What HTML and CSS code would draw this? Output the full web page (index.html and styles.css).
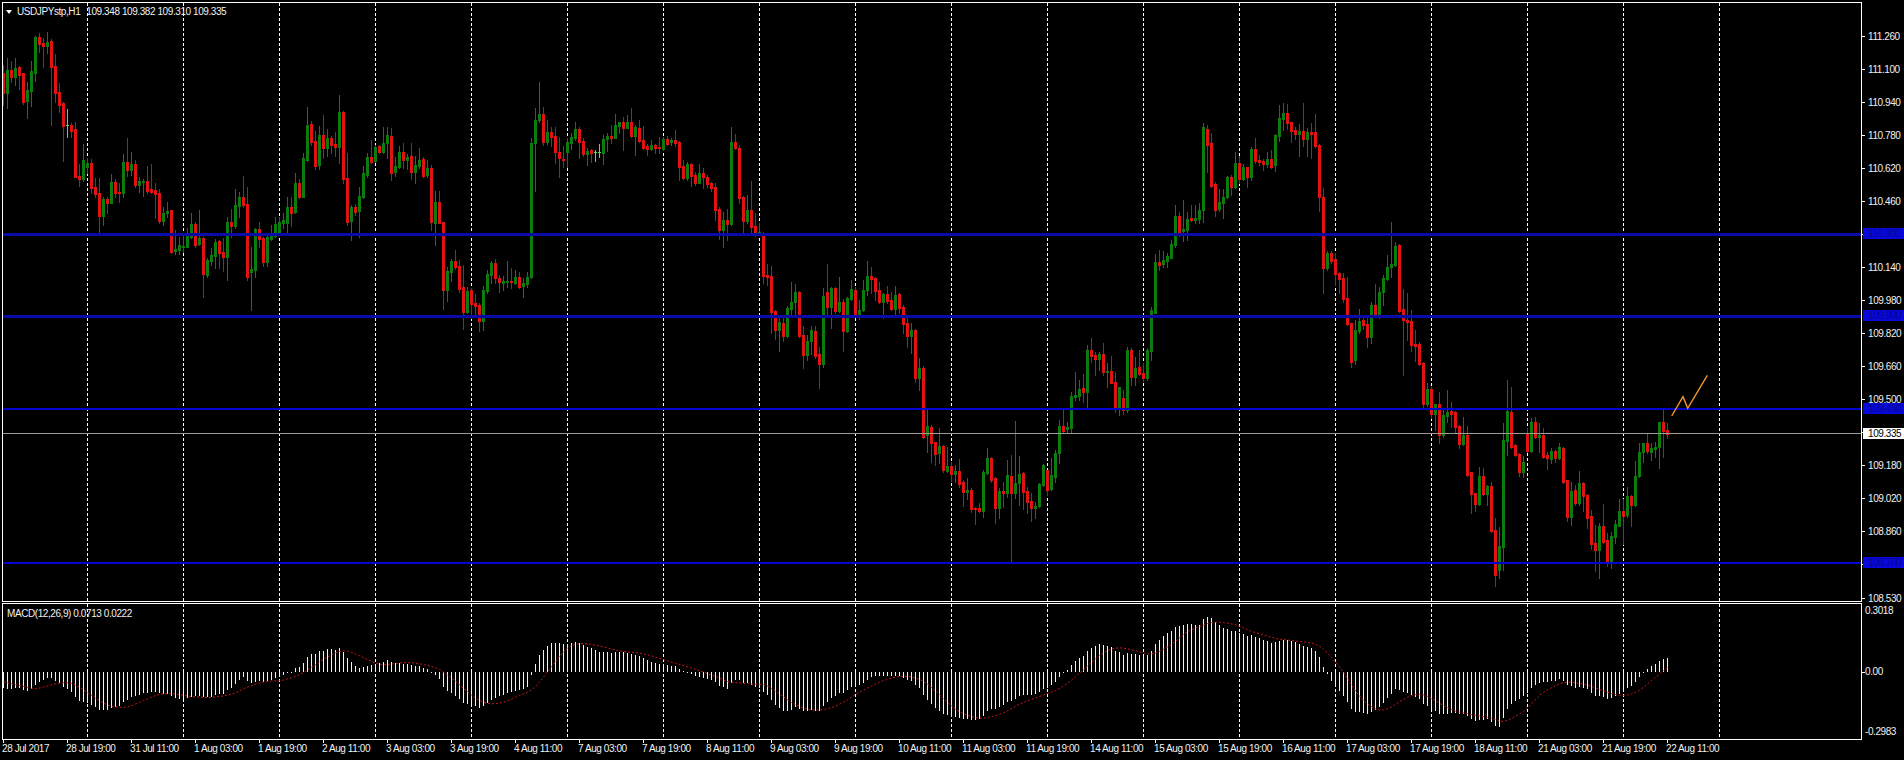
FILE: index.html
```html
<!DOCTYPE html>
<html lang="en">
<head>
<meta charset="utf-8">
<title>USDJPYstp,H1</title>
<link rel="stylesheet" href="styles.css">
</head>
<body>
<div class="terminal">
  <section class="row row-price">
    <div class="pane pane-price">
      <svg id="price-svg" class="plot" width="1858" height="598" viewBox="3 3 1858 598"></svg>
      <div class="legend legend-price">
        <span class="menu-arrow"></span>
        <span class="symbol">USDJPYstp,H1</span>
        <span>109.348 109.382 109.310 109.335</span>
      </div>
    </div>
    <div class="axis price-axis">
      <div class="tick">111.260</div>
      <div class="tick">111.100</div>
      <div class="tick">110.940</div>
      <div class="tick">110.780</div>
      <div class="tick">110.620</div>
      <div class="tick">110.460</div>
      <div class="tick">110.300</div>
      <div class="tick">110.140</div>
      <div class="tick">109.980</div>
      <div class="tick">109.820</div>
      <div class="tick">109.660</div>
      <div class="tick">109.500</div>
      <div class="tick">109.340</div>
      <div class="tick">109.180</div>
      <div class="tick">109.020</div>
      <div class="tick">108.860</div>
      <div class="tick">108.700</div>
      <div class="tick tick-last">108.530</div>
      <div class="badge badge-blue badge-a">110.300</div>
      <div class="badge badge-blue badge-b">109.900</div>
      <div class="badge badge-blue badge-c">109.450</div>
      <div class="badge badge-blue badge-d">108.700</div>
      <div class="badge badge-white badge-e">109.335</div>
    </div>
  </section>
  <section class="row row-macd">
    <div class="pane pane-macd">
      <svg id="macd-svg" class="plot" width="1858" height="135" viewBox="3 604 1858 135"></svg>
      <div class="legend legend-macd">MACD(12,26,9) 0.0713 0.0222</div>
    </div>
    <div class="axis macd-axis">
      <div class="macd-label">0.3018</div>
      <div class="macd-label macd-zero">0.00</div>
      <div class="macd-label">-0.2983</div>
    </div>
  </section>
  <footer class="time-axis">
    <div class="time">28 Jul 2017</div>
    <div class="time">28 Jul 19:00</div>
    <div class="time">31 Jul 11:00</div>
    <div class="time">1 Aug 03:00</div>
    <div class="time">1 Aug 19:00</div>
    <div class="time">2 Aug 11:00</div>
    <div class="time">3 Aug 03:00</div>
    <div class="time">3 Aug 19:00</div>
    <div class="time">4 Aug 11:00</div>
    <div class="time">7 Aug 03:00</div>
    <div class="time">7 Aug 19:00</div>
    <div class="time">8 Aug 11:00</div>
    <div class="time">9 Aug 03:00</div>
    <div class="time">9 Aug 19:00</div>
    <div class="time">10 Aug 11:00</div>
    <div class="time">11 Aug 03:00</div>
    <div class="time">11 Aug 19:00</div>
    <div class="time">14 Aug 11:00</div>
    <div class="time">15 Aug 03:00</div>
    <div class="time">15 Aug 19:00</div>
    <div class="time">16 Aug 11:00</div>
    <div class="time">17 Aug 03:00</div>
    <div class="time">17 Aug 19:00</div>
    <div class="time">18 Aug 11:00</div>
    <div class="time">21 Aug 03:00</div>
    <div class="time">21 Aug 19:00</div>
    <div class="time">22 Aug 11:00</div>
  </footer>
</div>
<script src="chart.js"></script>
</body>
</html>
```
FILE: styles.css
```css
* { box-sizing: border-box; }
html, body { margin: 0; padding: 0; background: #000; }
body {
  width: 1904px;
  height: 760px;
  overflow: hidden;
  color: #f0f0f0;
  font-family: "Liberation Sans", Arial, sans-serif;
  font-size: 10px;
  letter-spacing: -0.42px;
}
.terminal { padding: 2px 0 0 2px; }
.row { display: flex; }
.row-price { height: 600px; margin-bottom: 1px; }
.row-macd { height: 137px; }
.pane {
  position: relative;
  width: 1860px;
  border: 1px solid #fff;
  background: #000;
}
.plot { display: block; shape-rendering: crispEdges; }

.legend {
  position: absolute;
  display: flex;
  align-items: center;
  white-space: nowrap;
  line-height: 12px;
}
.legend-price { left: 3px; top: 3px; }
.legend-macd { left: 4px; top: 4px; }
.menu-arrow {
  width: 0;
  height: 0;
  margin-right: 5px;
  border-left: 3.5px solid transparent;
  border-right: 3.5px solid transparent;
  border-top: 4px solid #fff;
}
.symbol { margin-right: 6px; }

.axis { position: relative; flex: 1; }
.price-axis {
  display: flex;
  flex-direction: column;
  padding-top: 18px;
}
.tick {
  display: flex;
  align-items: center;
  height: 33px;
  flex: none;
}
.tick::before {
  content: "";
  width: 3px;
  height: 1px;
  margin-right: 3px;
  background: #fff;
}
.tick-last { margin-top: 1px; }

.badge {
  position: absolute;
  left: 1px;
  right: 0;
  height: 11px;
  padding-left: 5px;
  line-height: 11px;
}
.badge-blue { background: #0808dc; color: #06068c; }
.badge-white { background: #fff; color: #000; }
.badge-a { top: 226px; }
.badge-b { top: 308px; }
.badge-c { top: 401px; }
.badge-d { top: 555px; }
.badge-e { top: 426px; }

.macd-axis {
  display: flex;
  flex-direction: column;
  padding-top: 1px;
}
.macd-label {
  height: 14px;
  line-height: 14px;
  padding-left: 3px;
}
.macd-zero {
  position: relative;
  margin-top: 47px;
  margin-bottom: 46px;
}
.macd-zero::before {
  content: "";
  position: absolute;
  left: 0;
  top: 7px;
  width: 3px;
  height: 1px;
  background: #fff;
}

.time-axis {
  display: flex;
  padding-left: 0;
}
.time {
  position: relative;
  flex: none;
  width: 64px;
  padding-top: 3px;
  line-height: 12px;
  white-space: nowrap;
}
.time::before {
  content: "";
  position: absolute;
  left: 1px;
  top: 0;
  width: 1px;
  height: 3px;
  background: #fff;
}

.wick-bull { fill: #127a12; }
.wick-bear { fill: #c01414; }
.wick-doji { fill: #5fd85f; }
.body-bull { fill: #0c7c0c; }
.body-bear { fill: #e01212; }
.grid-line { stroke: #fff; stroke-width: 1; stroke-dasharray: 3 2; }
.level { stroke: #0a0aa8; stroke-width: 3; }
.level-bright { stroke: #0404d0; stroke-width: 2; }
.last-price { stroke: #9c9c9c; stroke-width: 1; }
.forecast {
  fill: none;
  stroke: #f2962c;
  stroke-width: 1.4;
  shape-rendering: geometricPrecision;
}
.hist { fill: #f4f4f4; }
.signal {
  fill: none;
  stroke: #c81818;
  stroke-width: 1;
  stroke-dasharray: 2 2;
  shape-rendering: geometricPrecision;
}
```
FILE: chart.js
```javascript
(function () {
var NS = "http://www.w3.org/2000/svg";
var DATA = "r73,93,65,105 g70,93,58,108 r70,77,61,82 g68,77,58,85 r67,75,66,89 r73,102,73,104 g90,101,82,118 g71,91,61,106 g37,73,36,81 r37,44,33,52 " +
"r43,46,38,67 g42,46,32,53 r41,67,39,125 r66,93,54,102 r92,105,83,112 r103,126,102,161 d125,126,109,137 r125,131,123,137 r129,177,122,177 r176,179,164,186 " +
"g160,179,144,181 g163,167,158,173 r163,188,159,193 r187,194,178,197 r193,216,178,235 g199,216,197,225 r199,203,197,213 g182,203,174,203 r182,193,179,197 r192,193,183,202 " +
"g162,193,154,197 r162,170,138,176 g164,170,152,175 r164,185,160,187 g181,185,177,192 g181,182,179,196 r181,191,166,193 r189,192,164,193 r190,194,183,218 r193,221,189,223 " +
"g213,221,207,225 g211,213,202,217 r210,252,210,253 g249,251,230,254 g245,250,237,254 g246,247,235,252 g236,247,228,247 g224,237,213,238 r224,245,222,247 g238,244,210,245 " +
"r238,274,237,297 g260,275,258,277 g255,261,248,265 g242,256,239,268 r241,253,240,268 r252,257,238,271 g222,257,217,280 r222,226,209,237 g205,226,189,228 g197,206,192,217 " +
"r197,205,176,207 r204,277,187,280 g269,272,247,310 g229,270,228,277 r229,239,222,247 r238,262,237,266 g237,262,236,266 g235,239,225,240 g224,236,217,237 g222,233,217,235 " +
"g220,223,213,228 g207,223,197,232 r207,213,197,226 g183,212,173,213 r183,197,179,198 g158,197,153,197 g125,160,107,161 r124,142,121,145 r141,166,131,169 g135,165,126,169 " +
"r135,148,115,158 g138,148,129,156 r138,145,136,153 r144,147,132,156 g112,147,95,163 r112,179,111,183 r178,222,153,225 g207,221,205,240 r207,212,204,215 g196,211,187,237 " +
"g173,197,166,198 g157,175,153,177 r157,162,140,163 g147,161,145,162 r146,152,145,153 g143,152,127,153 g135,143,127,158 r136,173,128,180 g166,172,157,176 g152,167,146,168 " +
"r152,160,143,168 g157,160,154,169 r156,172,143,179 g165,172,156,183 g160,166,148,168 r159,176,157,177 g168,175,160,177 r168,222,165,230 g202,223,191,245 r202,223,191,223 " +
"r222,290,222,309 g271,290,267,301 g261,272,259,281 r261,267,250,269 r266,289,260,292 r287,312,265,329 g291,312,287,313 r290,304,288,318 r303,306,294,317 r305,321,303,331 " +
"g290,321,286,330 g274,291,270,293 g263,275,261,283 r263,278,259,283 r278,282,275,292 g281,283,276,290 g281,282,261,287 r281,282,268,288 g277,283,270,284 r277,287,272,288 " +
"g283,286,278,297 g277,284,272,287 g143,277,138,278 g120,143,108,191 g114,120,82,122 r114,142,107,145 g132,142,120,144 r132,137,127,146 r136,152,127,163 r152,158,137,177 " +
"r159,160,146,167 g142,152,138,167 g137,143,133,149 g129,138,122,140 r129,142,127,158 r141,154,138,156 g151,154,148,165 r150,153,149,162 d152,153,150,161 d152,153,144,157 " +
"g139,153,135,164 g136,139,133,151 r136,138,125,143 g125,138,114,138 g122,126,122,133 r122,128,117,150 g122,128,115,128 r122,136,108,137 g127,136,125,155 r128,141,120,142 " +
"r140,148,126,149 r146,149,144,155 g145,149,140,150 r145,148,144,153 r147,148,137,153 g139,149,137,150 r139,144,136,145 g140,142,138,145 r140,143,130,146 r142,167,141,180 " +
"r166,178,160,179 g164,178,162,180 r164,176,163,186 r175,183,172,185 g173,183,164,183 r173,177,168,188 r177,184,175,187 r183,188,182,191 r187,210,183,220 r209,230,207,239 " +
"g220,230,212,247 r220,224,209,240 g142,224,127,225 r142,148,134,149 r148,198,145,203 r197,221,196,232 g210,221,195,223 r210,227,181,235 r226,233,213,236 g232,233,223,234 " +
"r233,276,232,283 r275,277,264,285 r276,312,266,333 r311,330,310,339 g322,330,315,351 r323,336,315,341 g308,336,306,337 g302,309,282,314 g292,302,284,315 r292,336,291,337 " +
"r335,355,326,368 g341,355,335,360 g330,341,326,354 r331,356,326,358 r354,364,347,388 g296,364,288,367 r292,307,264,315 g288,307,287,328 r288,311,287,313 g302,311,277,312 " +
"r302,331,299,351 g298,331,297,332 g289,299,280,300 r290,315,287,317 g310,315,300,319 g290,310,280,311 g276,290,261,295 r276,279,267,293 r278,291,277,300 r290,302,282,303 " +
"g294,302,293,318 r294,301,286,303 r300,309,292,310 g295,309,286,315 r294,308,293,313 r307,324,305,333 r323,336,317,347 g330,336,323,353 r330,378,329,382 g368,378,358,390 " +
"r368,437,366,438 g426,435,409,452 r427,443,425,462 r442,454,442,465 g446,453,428,463 r446,470,445,472 g466,471,447,472 r466,474,462,481 g471,474,465,482 r471,484,459,487 " +
"r482,492,480,506 g490,492,478,499 r490,509,488,512 r508,509,507,524 r508,511,503,512 g472,511,470,517 g458,473,448,474 r458,480,457,482 r478,508,477,523 g491,508,488,518 " +
"r491,493,482,507 g475,493,460,497 r476,493,455,562 g483,493,421,498 g474,483,456,505 r473,492,472,509 r491,502,487,513 r501,508,493,521 g506,508,502,518 g484,506,483,507 " +
"g465,485,464,486 r470,490,470,495 g475,489,458,490 g453,477,450,482 g426,453,420,463 r426,431,410,432 g427,429,422,433 g396,428,392,432 g395,397,372,400 g389,396,380,400 " +
"r388,392,374,402 g350,392,345,408 r350,356,338,362 r355,359,352,375 g354,359,352,370 r354,372,343,375 g371,372,363,387 r371,383,356,383 r382,407,372,412 g387,408,387,415 " +
"r398,410,390,414 g350,410,347,412 r350,377,348,385 g368,377,357,385 r367,374,350,375 r373,378,363,381 g350,378,348,380 g310,351,307,360 g262,313,254,313 r262,265,250,270 " +
"g260,264,251,267 g256,261,253,267 g244,258,240,258 g216,245,205,247 r216,232,212,236 g229,231,200,241 g219,230,212,240 r218,220,205,221 g218,220,205,223 g210,219,203,223 " +
"g127,210,123,222 r129,145,125,172 r143,186,133,187 r184,210,182,216 g202,209,189,211 g197,203,189,218 g177,197,176,198 r177,187,175,195 g163,187,152,188 r163,179,156,183 " +
"g167,179,164,180 r167,177,167,187 g149,177,147,180 r149,161,138,163 r160,162,155,165 r161,164,159,170 g159,164,152,167 r159,167,150,168 g135,165,134,171 g118,136,105,141 " +
"g113,119,103,130 r113,123,104,129 r122,131,122,142 r130,134,127,139 g131,134,124,156 r131,139,103,146 g132,139,128,156 r132,134,123,158 r132,146,114,147 r145,197,144,211 " +
"r197,268,188,293 g253,268,251,270 r253,261,251,263 r259,274,253,285 r273,279,272,293 r278,299,273,302 r298,324,277,325 r323,362,323,367 g330,360,320,364 g321,331,309,333 " +
"r320,325,318,329 r324,337,318,347 g305,337,302,343 r305,314,284,317 g292,314,287,318 g278,292,275,305 g267,279,255,280 g264,267,222,277 g246,265,242,266 r245,311,244,312 " +
"r309,320,289,375 r320,322,293,340 r321,345,310,351 r344,346,330,361 r344,364,342,365 r363,404,362,408 g389,404,383,406 r389,414,387,418 g404,414,404,430 r404,435,392,443 " +
"g415,435,408,437 g412,416,390,422 r411,414,402,427 r412,427,411,433 r426,444,425,448 g435,444,417,445 r435,475,426,476 r472,494,472,513 r493,504,493,511 g476,504,467,505 " +
"r476,494,468,495 g486,494,485,505 r486,531,482,532 r530,575,518,586 g546,570,527,578 g440,547,423,570 g411,441,380,455 r412,447,387,448 r445,455,444,456 r454,472,453,476 " +
"g462,472,456,477 r433,451,428,452 g422,451,418,452 r422,437,417,438 g435,437,423,452 r435,457,428,458 r455,458,452,469 g451,459,448,463 r451,458,450,462 g447,458,443,459 " +
"r448,482,447,483 r480,517,480,521 g491,517,482,525 r490,503,485,505 g483,503,471,505 r483,496,482,511 r495,518,494,528 r516,544,510,549 r543,550,525,571 g526,550,523,578 " +
"r526,542,504,543 r540,562,533,566 g536,562,532,568 g524,537,520,543 g511,526,499,526 r511,516,499,544 g496,515,487,517 r496,505,495,526 g476,505,461,506 g452,476,443,477 " +
"g443,452,443,462 r443,451,433,453 g448,452,443,460 g447,449,442,457 g422,447,422,468 r422,431,410,457 r430,434,423,438";

function el(parent, name, attrs) {
  var node = document.createElementNS(NS, name);
  for (var key in attrs) node.setAttribute(key, attrs[key]);
  parent.appendChild(node);
  return node;
}

var bars = DATA.split(" ").map(function (item, i) {
  var v = item.slice(1).split(",").map(Number);
  return { x: 3 + 4 * i, kind: item[0], top: v[0], bot: v[1], hi: v[2], lo: v[3] };
});

function drawGrid(svg, y1, y2) {
  for (var k = 0; k < 18; k++) {
    var x = 87.5 + 96 * k;
    el(svg, "line", { "class": "grid-line", x1: x, x2: x, y1: y1, y2: y2 });
  }
}

var price = document.getElementById("price-svg");
drawGrid(price, 3, 601);
bars.forEach(function (b) {
  var names = { r: "bear", g: "bull", d: "doji" };
  el(price, "rect", { "class": "wick-" + names[b.kind], x: b.x, y: b.hi, width: 1, height: b.lo - b.hi + 1 });
  if (b.kind !== "d") {
    el(price, "rect", { "class": "body-" + names[b.kind], x: b.x - 1, y: b.top, width: 3, height: b.bot - b.top + 1 });
  } else {
    el(price, "rect", { "class": "wick-doji", x: b.x - 1, y: b.top, width: 3, height: 1 });
  }
});
el(price, "line", { "class": "level", x1: 3, x2: 1861, y1: 234, y2: 234 });
el(price, "line", { "class": "level", x1: 3, x2: 1861, y1: 316, y2: 316 });
el(price, "line", { "class": "level level-bright", x1: 3, x2: 1861, y1: 409, y2: 409 });
el(price, "line", { "class": "level level-bright", x1: 3, x2: 1861, y1: 563, y2: 563 });
el(price, "line", { "class": "last-price", x1: 3, x2: 1861, y1: 433.5, y2: 433.5 });
el(price, "polyline", { "class": "forecast", points: "1671.7,416 1683,396.7 1687.7,408.3 1707.3,375.3" });

/* MACD(12,26,9) derived from the bar closes; pane scale is close to the price scale */
var macd = document.getElementById("macd-svg");
drawGrid(macd, 604, 739);
var ZERO = 672, RATIO = 203 / 206.25;
var ema12 = 46, ema26 = 32, a12 = 2 / 13, a26 = 2 / 27;
var recent = [-8, -8, -8, -9, -9, -9, -10, -10];
var signalPoints = [];
bars.forEach(function (b) {
  var close = b.kind === "g" ? b.top : b.bot;
  ema12 += (close - ema12) * a12;
  ema26 += (close - ema26) * a26;
  var m = (ema26 - ema12) * RATIO;
  recent.push(m);
  var last = recent.slice(-9);
  var s = last.reduce(function (p, c) { return p + c; }, 0) / 9;
  var h = Math.round(Math.abs(m));
  el(macd, "rect", { "class": "hist", x: b.x, y: m >= 0 ? ZERO - h : ZERO, width: 1, height: Math.max(h, 1) });
  signalPoints.push((b.x + 0.5) + "," + (ZERO - s).toFixed(1));
});
el(macd, "polyline", { "class": "signal", points: signalPoints.join(" ") });
})();
```
